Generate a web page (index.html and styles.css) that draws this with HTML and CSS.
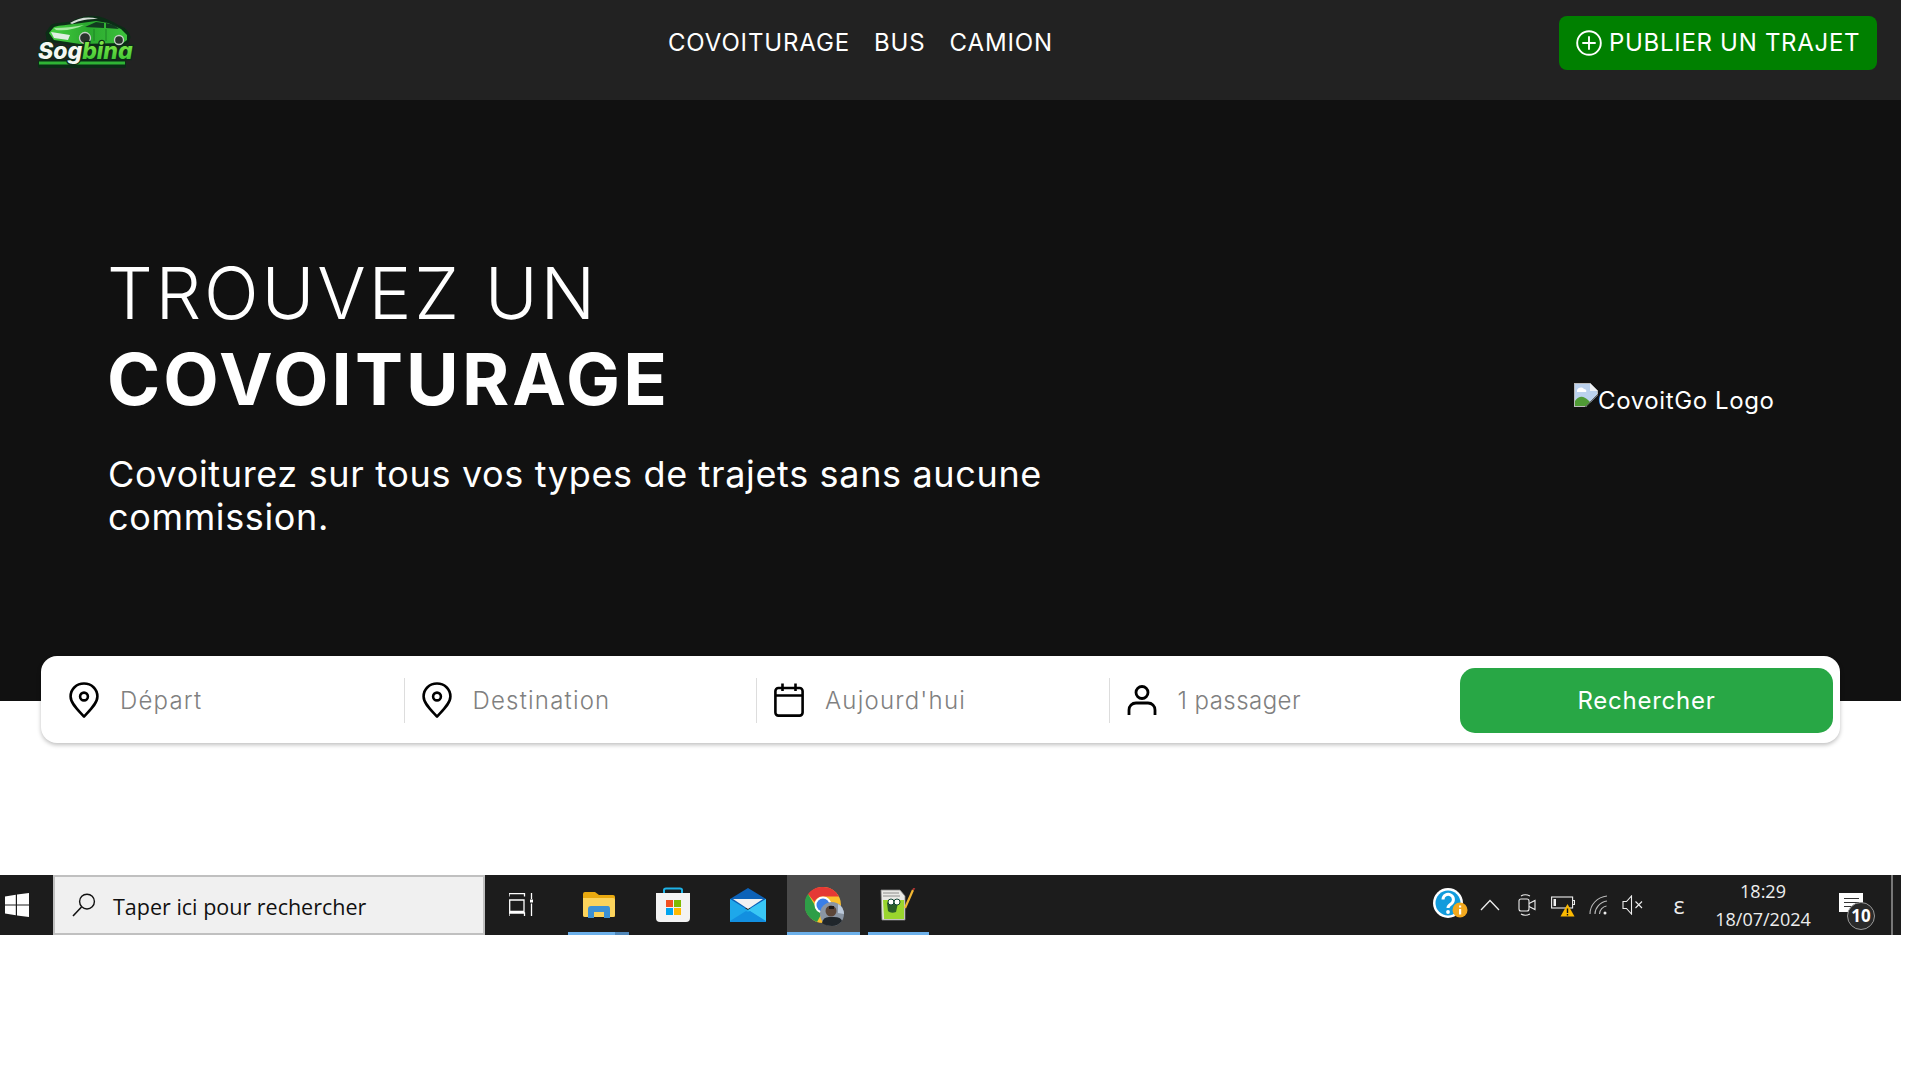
FILE: index.html
```html
<!DOCTYPE html>
<html lang="fr">
<head>
<meta charset="utf-8">
<title>Sogbina</title>
<link rel="stylesheet" href="styles.css">
</head>
<body>
<div class="page">
  <header class="topbar">
    <a class="logo" href="#">
      <svg width="138" height="70" viewBox="0 0 138 70">
        <defs>
          <linearGradient id="carG" x1="0" y1="0" x2="1" y2="0"><stop offset="0" stop-color="#45d040"/><stop offset=".5" stop-color="#2aa82e"/><stop offset="1" stop-color="#3cc23c"/></linearGradient>
          <linearGradient id="txtG" x1="0" y1="0" x2="0" y2="1"><stop offset="0" stop-color="#96f24e"/><stop offset="1" stop-color="#2bbd30"/></linearGradient>
        </defs>
        <path d="M23 25L28 18C34 16 42 16 48 15 55 10 66 8 75 10 83 12 90 16 95 19 100 21 104 24 105 29L103 34 99 37 56 37 30 33 24 31Z" fill="#0b2d16" stroke="#0b2d16" stroke-width="3"/>
        <path d="M25 25L30 19C36 17 44 17 50 16L72 13 84 15 97 21 103 27 103 32 99 35 56 36 30 32Z" fill="url(#carG)"/>
        <path d="M46 15C54 10 64 8 74 11 64 11 56 12 48 16Z" fill="#d5ddd7"/>
        <path d="M61 19L72 14 80 15 80 20ZM82 15L90 17 95 21 82 20Z" fill="#123a20"/>
        <path d="M27 24L46 27 44 32 30 30Z" fill="#dfeee2"/>
        <path d="M30 20C40 20 50 19 60 17 52 21 42 23 32 22Z" fill="#a6e8a0"/>
        <path d="M70 21V33M82 21V33" stroke="#1a7a25" stroke-width=".8"/>
        <circle cx="61" cy="30" r="5.500" fill="#2a332d" stroke="#c8d0ca" stroke-width="1.300"/>
        <circle cx="95" cy="32" r="4.500" fill="#2a332d" stroke="#c8d0ca" stroke-width="1.300"/>
        <rect x="14" y="52" width="88" height="8" rx="2" fill="#0b2d16"/>
        <rect x="15" y="53.500" width="86" height="3" fill="#2fb535"/>
        <text class="logo-a" x="14" y="51"><tspan class="logo-w">Sog</tspan><tspan fill="url(#txtG)">bina</tspan></text>
      </svg>
    </a>
    <nav class="mainnav">
      <a href="#">COVOITURAGE</a>
      <a href="#">BUS</a>
      <a href="#">CAMION</a>
    </nav>
    <a class="publish" href="#">
      <svg width="26" height="26" viewBox="0 0 26 26" fill="none" stroke="#fff" stroke-width="1.900"><circle cx="13" cy="13" r="11.800"/><path d="M13 7v12M7 13h12" stroke-linecap="round"/></svg>
      <span>PUBLIER UN TRAJET</span>
    </a>
  </header>

  <section class="hero">
    <div class="hero-text">
      <h1>TROUVEZ UN<br><strong>COVOITURAGE</strong></h1>
      <p>Covoiturez sur tous vos types de trajets sans aucune commission.</p>
    </div>
    <div class="hero-logo">
      <svg width="24" height="24" viewBox="0 0 24 24"><path d="M0 0H16L24 8V24H0Z" fill="#b9b9b9"/><path d="M1 1H15.500L23 8.500V23H1Z" fill="#bcd2ee"/><path d="M3 7c2-3 5-3 7-1 2 0 3 2 2 3H3Z" fill="#fff"/><path d="M1 23V18C5 12 10 13 14 17L20 23Z" fill="#4f9a35"/><path d="M16 0V8H24Z" fill="#eef1f5"/><path d="M12 24L24 12V24Z" fill="#111"/><path d="M11 24L24 11" stroke="#666" stroke-width="1"/></svg>
      <span>CovoitGo Logo</span>
    </div>
  </section>

  <form class="search">
    <div class="field">
      <svg class="ficon" width="30" height="36" viewBox="0 0 30 36" fill="none" stroke="#000" stroke-width="2.600"><path d="M15 34.500C9 28 1.600 21.500 1.600 14.500 1.600 7 7.500 1.500 15 1.500S28.400 7 28.400 14.500C28.400 21.500 21 28 15 34.500Z" stroke-linejoin="round"/><circle cx="15" cy="14.500" r="3.900"/></svg>
      <span>Départ</span>
    </div>
    <div class="field">
      <svg class="ficon" width="30" height="36" viewBox="0 0 30 36" fill="none" stroke="#000" stroke-width="2.600"><path d="M15 34.500C9 28 1.600 21.500 1.600 14.500 1.600 7 7.500 1.500 15 1.500S28.400 7 28.400 14.500C28.400 21.500 21 28 15 34.500Z" stroke-linejoin="round"/><circle cx="15" cy="14.500" r="3.900"/></svg>
      <span>Destination</span>
    </div>
    <div class="field">
      <svg class="ficon" width="30" height="34" viewBox="0 0 30 34" fill="none" stroke="#000" stroke-width="2.600"><rect x="1.400" y="5" width="27.200" height="27.600" rx="3"/><path d="M1.400 12.500h27.200M8.500 .5v7.500M21.500 .5v7.500"/></svg>
      <span>Aujourd'hui</span>
    </div>
    <div class="field field-last">
      <svg class="ficon" width="30" height="30" viewBox="0 0 30 30" fill="none" stroke="#000" stroke-width="2.800"><circle cx="15" cy="7.500" r="6"/><path d="M2 30v-5c0-4 3-7 7-7h12c4 0 7 3 7 7v5"/></svg>
      <span>1 passager</span>
    </div>
    <button class="go" type="button">Rechercher</button>
  </form>

  <footer class="taskbar">
    <div class="start">
      <svg width="24" height="24" viewBox="0 0 24 24" fill="#fff"><path d="M0 3.400L10.800 1.800V11.400H0ZM12 1.600L24 0V11.400H12ZM0 12.600H10.800V22.200L0 20.600ZM12 12.600H24V24L12 22.400Z"/></svg>
    </div>
    <div class="winsearch">
      <svg width="24" height="24" viewBox="0 0 24 24" fill="none" stroke="#111" stroke-width="1.400"><circle cx="15" cy="8.600" r="7.400"/><path d="M9.500 14L1 23" stroke-width="1.600"/></svg>
      <span>Taper ici pour rechercher</span>
    </div>
    <div class="apps">
      <div class="app app-tv">
        <svg width="24" height="24" viewBox="0 0 24 24" fill="none" stroke="#fff" stroke-width="1.300"><path d="M0 3.500V.7H15.500V3.500M.7 7H15V18.500H.7ZM0 23V20H15.500V23M22.500 0V6M22.500 10.500V23"/><rect x="21" y="6.500" width="3" height="3" fill="#fff" stroke="none"/></svg>
      </div>
      <div class="app app-split">
        <svg width="32" height="26" viewBox="0 0 32 26"><path d="M0 2Q0 0 2 0H12L16 3H30Q32 3 32 5V24Q32 25 30 25H2Q0 25 0 23Z" fill="#e9a90f"/><path d="M0 6H30Q32 6 32 8V23Q32 25 30 25H2Q0 25 0 23Z" fill="#fbd35c"/><path d="M5 26V17Q5 14 8 14H25Q27 14 27 17V26H21V20H11V26Z" fill="#3c90d4"/></svg>
      </div>
      <div class="app app-store">
        <svg width="36" height="36" viewBox="0 0 36 36"><path d="M9 8V3Q9 1.500 11 1.500H25Q27 1.500 27 3V8" fill="none" stroke="#1eb3e8" stroke-width="2"/><path d="M1 6H35V31Q35 35 31 35H5Q1 35 1 31Z" fill="#f3f3f3"/><rect x="11" y="13" width="7" height="7" fill="#f25022"/><rect x="19" y="13" width="7" height="7" fill="#7fba00"/><rect x="11" y="21" width="7" height="7" fill="#00a4ef"/><rect x="19" y="21" width="7" height="7" fill="#ffb900"/></svg>
      </div>
      <div class="app app-mail">
        <svg width="36" height="34" viewBox="0 0 36 34"><path d="M0 11L18 0 36 11V20H0Z" fill="#0c62b8"/><path d="M3 11H33L18 21Z" fill="#f2f2f2"/><path d="M0 11L18 22 36 11V34H0Z" fill="#1ea8ea"/><path d="M36 11V34L18 22Z" fill="#39c7f5"/><path d="M0 34V33L16 23 18 24 20 23 36 33V34Z" fill="#128fe0"/></svg>
      </div>
      <div class="app app-active">
        <svg width="40" height="40" viewBox="0 0 40 40"><circle cx="18" cy="18" r="18" fill="#fbc02d"/><path d="M18 0A18 18 0 0 1 34 9.500H18A9 9 0 0 0 9.500 15L3 7A18 18 0 0 1 18 0Z" fill="#e53935"/><path d="M3 7L11 20A8 8 0 0 0 17 26L12 35A18 18 0 0 1 3 7Z" fill="#2e9e47"/><circle cx="18" cy="18" r="8.500" fill="#fff"/><circle cx="18" cy="18" r="6.500" fill="#3a7fe8"/><circle cx="27" cy="27" r="12" fill="#8a95a3"/><path d="M17 36Q18 30 24 30H29Q36 30 37 34 33 39 27 39 21 39 17 36Z" fill="#20262b"/><circle cx="26" cy="24" r="5.500" fill="#5c4638"/><path d="M24 19H29V22H24Z" fill="#1e1a18"/><path d="M33 17A12 12 0 0 1 39 27L33 26Z" fill="#bccadb"/></svg>
      </div>
      <div class="app app-on">
        <svg width="36" height="34" viewBox="0 0 36 34"><path d="M1 2H20L25 8V32H2Z" fill="#e9e9e5" stroke="#888" stroke-width=".8"/><path d="M3 12H24V31H4Z" fill="#9ad62e"/><path d="M7 15c3-3 8-3 11 0l-2 9c-3 1-6 1-8-1Z" fill="#2b5d2a"/><circle cx="11" cy="14" r="3" fill="#fff" stroke="#143" stroke-width="1"/><circle cx="17" cy="14" r="3" fill="#fff" stroke="#143" stroke-width="1"/><path d="M3 5H19M3 8H20" stroke="#777" stroke-width=".8"/><path d="M25 20L33 2" stroke="#f2b632" stroke-width="2.200"/><path d="M33 2L34.500 0" stroke="#a33" stroke-width="2"/></svg>
      </div>
    </div>
    <div class="tray">
      <div class="tcell tc40">
        <svg width="38" height="36" viewBox="0 0 38 36"><circle cx="16" cy="16" r="15" fill="#fff"/><circle cx="16" cy="16" r="12.500" fill="#119bdc"/><path d="M11 12.500a5.200 5.200 0 1 1 8 4.400c-2 1.300-3 2-3 4" fill="none" stroke="#fff" stroke-width="3"/><circle cx="16" cy="25" r="1.900" fill="#fff"/><circle cx="28" cy="23" r="7.500" fill="#f2a81d"/><rect x="27" y="22" width="2.200" height="5.500" fill="#fff"/><rect x="27" y="18.500" width="2.200" height="2" fill="#fff"/></svg>
      </div>
      <div class="tcell tc38">
        <svg width="20" height="12" viewBox="0 0 20 12" fill="none" stroke="#eee" stroke-width="1.300"><path d="M1 11L10 1.500 19 11"/></svg>
      </div>
      <div class="tcell tc36">
        <svg width="18" height="24" viewBox="0 0 18 24" fill="none" stroke="#eee" stroke-width="1.100"><rect x="1" y="6" width="10" height="12" rx="2"/><path d="M11 10.500L17 7.500V16.500L11 13.500M3 3Q7 .5 12 3M3 21Q7 23.500 12 21"/></svg>
      </div>
      <div class="tcell tc35">
        <svg width="24" height="24" viewBox="0 0 24 24" fill="none" stroke="#eee" stroke-width="1.100"><rect x=".6" y="4" width="21" height="11"/><rect x="2.500" y="6" width="2.500" height="7" fill="#eee" stroke="none"/><path d="M22 7.500h1.500v4H22"/><path d="M16.500 11L23.500 23.500H9.500Z" fill="#fcb900" stroke="none"/><path d="M16.500 15.500V20M16.500 21V22.500" stroke="#111" stroke-width="1.400"/></svg>
      </div>
      <div class="tcell tc37">
        <svg width="20" height="20" viewBox="0 0 20 20" fill="none" stroke="#bbb" stroke-width="1.100"><path d="M1 19C1 10 8 2 18 1M6 19C6 13 11 7 18 6M10.500 19C10.500 15 14 11.500 17.500 11"/><circle cx="16" cy="18" r="1.500" fill="#eee" stroke="none"/></svg>
      </div>
      <div class="tcell tc32">
        <svg width="22" height="20" viewBox="0 0 22 20" fill="none" stroke="#eee" stroke-width="1.100"><path d="M1 6.500H4.500L9.500 1V19L4.500 13.500H1ZM13.500 6.500L20 13M20 6.500L13.500 13"/></svg>
      </div>
      <div class="tcell tc60 tlang">ε</div>
      <div class="clock"><span>18:29</span><span>18/07/2024</span></div>
      <div class="notif">
        <svg width="26" height="24" viewBox="0 0 26 24"><path d="M0 0H24V19H13L9 24V19H0Z" fill="#fff"/><path d="M5 5.500H20M5 9.500H20M5 13.500H16" stroke="#333" stroke-width="1.100"/></svg>
        <span class="badge">10</span>
      </div>
      <div class="tdiv"></div>
    </div>
  </footer>
</div>
</body>
</html>
```
FILE: styles.css
```css
* { box-sizing: border-box; }
html, body { margin: 0; padding: 0; background: #fff; }
body { font-family: Inter, "Noto Sans", sans-serif; color: #fff; }
a { color: inherit; text-decoration: none; }
.page { width: 1901px; }

.topbar { height: 100px; background: #222; padding: 0 24px 14px; display: flex; align-items: center; justify-content: space-between; }
.logo { display: block; width: 138px; height: 70px; }
.logo svg { display: block; }
.logo-a { font: italic 800 23px Inter, sans-serif; paint-order: stroke; stroke: #0b2d16; stroke-width: 2.500px; }
.logo-w { fill: #f4f8f2; }

.mainnav { display: flex; gap: 24px; padding-bottom: 2px; font-size: 24px; letter-spacing: 0.87px; }
.publish { width: 318px; height: 54px; background: #008000; border-radius: 8px; display: flex; align-items: center; gap: 7px; padding-left: 17px; font-size: 24px; letter-spacing: 0.7px; }
.publish svg { flex: none; }
.publish span { padding-bottom: 2px; }

.hero { height: 601px; background: #111; display: flex; align-items: flex-start; justify-content: space-between; padding: 150px 128px 0 107px; }
.hero-text { width: 1000px; }
.hero h1 { margin: 0; font-size: 72px; line-height: 86px; font-weight: 300; letter-spacing: 2.8px; }
.hero h1 strong { font-weight: 700; letter-spacing: 3.1px; }
.hero p { margin: 31px 0 0 1px; font-size: 36px; line-height: 43px; font-weight: 400; letter-spacing: 0.65px; }
.hero-logo { display: flex; align-items: flex-start; margin-top: 133px; font-size: 24px; line-height: 29px; letter-spacing: 0.6px; width: 199px; }
.hero-logo svg { flex: none; }
.hero-logo span { margin-top: 3px; white-space: nowrap; }

.search { position: relative; width: 1799px; height: 87px; margin: -45px 0 132px 41px; background: #fff; border-radius: 16px; box-shadow: 0 2px 4px rgba(0,0,0,.25); padding: 11px 7px 10px 11px; display: grid; grid-template-columns: repeat(4, 352.500px) 371px; align-items: center; }
.field { height: 45px; display: flex; align-items: center; padding-left: 17px; border-right: 1.500px solid #ddd; color: #808080; font-size: 24px; font-weight: 300; letter-spacing: 1.2px; }
.field-last { border-right: 0; letter-spacing: 0.45px; }
.ficon { flex: none; margin-right: 21px; }
.go { justify-self: start; width: 373px; height: 65px; margin-left: -2px; border: 0; border-radius: 15px; background: #28a745; color: #fff; font: 400 24px Inter, sans-serif; letter-spacing: .75px; }

.taskbar { height: 60px; background: #1c1c1c; display: flex; align-items: stretch; }
.start { width: 53px; display: flex; align-items: center; padding-left: 5px; }
.winsearch { width: 432px; background: #f0f0f0; border: 2px solid #c0c0c0; display: flex; align-items: center; padding-left: 17px; gap: 17px; color: #111; font: 400 21.500px "Open Sans", "Noto Sans", sans-serif; }
.winsearch span { padding-top: 2px; }
.apps { display: flex; margin-left: 1px; }
.app { position: relative; width: 75px; display: flex; align-items: center; justify-content: center; }
.app-tv { padding-right: 5px; }
.app-store { padding-right: 2px; }
.app-mail { width: 76px; padding-right: 2px; }
.app-active { width: 73px; background: #4a4a4a; padding: 4px 0 0 3px; }
.app-active::after, .app-on::after, .app-split::after { content: ""; position: absolute; bottom: 0; height: 3px; background: #6cb0ea; }
.app-active::after { left: 0; right: 0; }
.app-on::after { left: 8px; right: 6px; }
.app-split::after { left: 7px; right: 7px; background: linear-gradient(90deg, #6cb0ea 0 47px, #4f86b8 47px); }

.tray { margin-left: auto; display: flex; align-items: stretch; color: #eee; }
.tcell { display: flex; align-items: center; justify-content: center; }
.tc40 { width: 40px; }
.tc38 { width: 38px; }
.tc36 { width: 36px; }
.tc35 { width: 35px; }
.tc37 { width: 37px; }
.tc32 { width: 32px; }
.tc60 { width: 60px; }
.tlang { font: 400 23px "Open Sans", sans-serif; }
.clock { width: 108px; display: flex; flex-direction: column; align-items: center; justify-content: center; gap: 5px; font: 400 18px/23px "Open Sans", sans-serif; color: #eee; }
.notif { position: relative; width: 74px; display: flex; align-items: center; padding-left: 22px; }
.badge { position: absolute; left: 30px; top: 27px; width: 28px; height: 28px; border-radius: 50%; background: #2a2a2a; border: 1.500px solid #999; color: #fff; font: 700 17px/25px "Open Sans", sans-serif; text-align: center; }
.tdiv { width: 2px; background: #777; margin-right: 8px; }
```
